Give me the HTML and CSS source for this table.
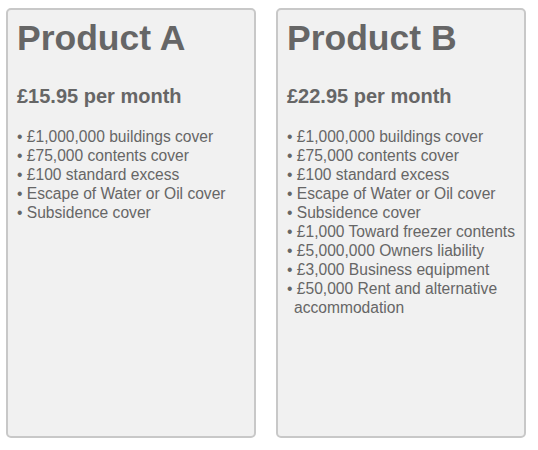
FILE: index.html
```html
<!DOCTYPE html>
<html lang="en">
<head>
    <meta charset="UTF-8">
    <title>Products</title>
    <link rel="stylesheet" href="styles.css">
</head>
<body>
    <div class="products">
        <div class="product">
            <h2>Product A</h2>
            <p class="price">£15.95 per month</p>
            <ul>
                <li>• £1,000,000 buildings cover</li>
                <li>• £75,000 contents cover</li>
                <li>• £100 standard excess</li>
                <li>• Escape of Water or Oil cover</li>
                <li>• Subsidence cover</li>
            </ul>
        </div>
        <div class="product">
            <h2>Product B</h2>
            <p class="price">£22.95 per month</p>
            <ul>
                <li>• £1,000,000 buildings cover</li>
                <li>• £75,000 contents cover</li>
                <li>• £100 standard excess</li>
                <li>• Escape of Water or Oil cover</li>
                <li>• Subsidence cover</li>
                <li>• £1,000 Toward freezer contents</li>
                <li>• £5,000,000 Owners liability</li>
                <li>• £3,000 Business equipment</li>
                <li>• £50,000 Rent and alternative accommodation</li>
            </ul>
        </div>
    </div>
</body>
</html>
```

FILE: styles.css
```css
body {
    margin: 0;
    padding: 8px 6px;
    font-family: 'Liberation Sans', Arial, sans-serif;
    background-color: #fff;
    color: #666;
}
.products {
    display: flex;
    gap: 20px;
}
.product {
    width: 250px;
    height: 430px;
    box-sizing: border-box;
    padding: 0 2px 0 9px;
    background-color: #f1f1f1;
    border: 2px solid #c8c8c8;
    border-radius: 5px;
}
.product h2 {
    margin: 8px 0 0;
    font-size: 35.5px;
    line-height: 40px;
    color: #666;
}
.price {
    margin: 26px 0 0;
    font-size: 20px;
    font-weight: bold;
    line-height: 24px;
    color: #666;
}
ul {
    list-style: none;
    margin: 19px 0 0;
    padding: 0 0 0 7px;
    font-size: 15.6px;
    line-height: 19px;
    color: #666;
}
ul li {
    text-indent: -7px;
}
```
